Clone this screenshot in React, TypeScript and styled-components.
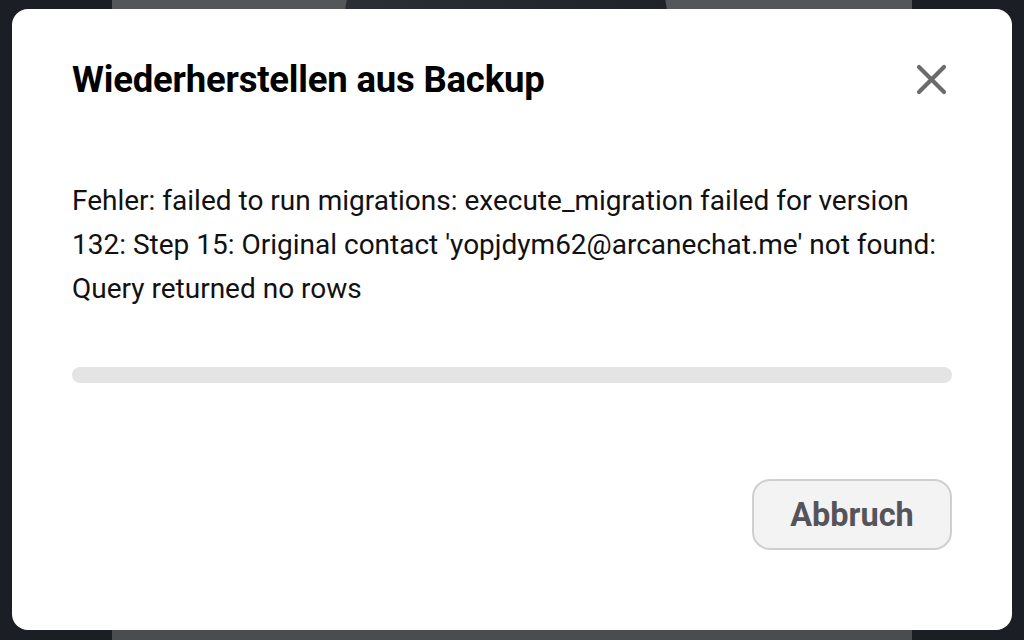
import React from 'react';
import styled, { createGlobalStyle } from 'styled-components';

const GlobalStyle = createGlobalStyle`
    html, body {
        margin: 0;
        padding: 0;
        width: 1024px;
        height: 640px;
        overflow: hidden;
        font-family: Roboto, "Liberation Sans", Arial, sans-serif;
    }
`;

const Page = styled.div`
    position: relative;
    width: 1024px;
    height: 640px;
    background-color: #1b1e25;
    display: flex;
    justify-content: center;
`;

const MainColumn = styled.div`
    width: 800px;
    height: 100%;
    background: linear-gradient(180deg, #555659 0%, #4b4c50 100%);
    display: flex;
`;

const TopShape = styled.div`
    margin-left: 228px;
    width: 332px;
    height: 40px;
    background: linear-gradient(90deg, #2c2f35, #1f2329);
    clip-path: polygon(2% 0, 98% 0, 100% 100%, 0 100%);
`;

const Dialog = styled.div`
    position: absolute;
    left: 12px;
    top: 9px;
    width: 1000px;
    height: 621px;
    box-sizing: border-box;
    padding: 0 60px;
    background: #ffffff;
    border-radius: 16px;
    display: flex;
    flex-direction: column;
`;

const Header = styled.header`
    margin-top: 40px;
    height: 60px;
    display: flex;
    align-items: center;
    justify-content: space-between;
`;

const Title = styled.h2`
    margin: 0;
    font-size: 36.5px;
    font-weight: 700;
    color: #000000;
    letter-spacing: -0.2px;
`;

const CloseButton = styled.button`
    width: 31px;
    height: 31px;
    margin-right: 5px;
    padding: 0;
    border: none;
    background: none;
    display: flex;
    cursor: pointer;
`;

const Message = styled.p`
    margin: 70px 0 0;
    font-size: 28px;
    line-height: 44px;
    color: #111111;
`;

const Progress = styled.div`
    margin-top: 56px;
    height: 16px;
    border-radius: 8px;
    background: #e5e4e5;
`;

const Footer = styled.footer`
    margin-top: 96px;
    display: flex;
    justify-content: flex-end;
`;

const CancelButton = styled.button`
    width: 200px;
    height: 71px;
    box-sizing: border-box;
    border: 2px solid #cfcfcf;
    border-radius: 18px;
    background: #f3f3f3;
    color: #55545a;
    font-family: Roboto, "Liberation Sans", Arial, sans-serif;
    font-size: 32.5px;
    font-weight: 700;
    cursor: pointer;
`;

const CloseIcon = () => (
    <svg width="31" height="31" viewBox="0 0 31 31">
        <path d="M3 3 L28 28 M28 3 L3 28" stroke="#6b6b6b" strokeWidth="4.2" strokeLinecap="round" fill="none" />
    </svg>
);

const App = () => {
    return (
        <>
            <GlobalStyle />
            <Page>
                <MainColumn>
                    <TopShape />
                </MainColumn>
                <Dialog>
                    <Header>
                        <Title>Wiederherstellen aus Backup</Title>
                        <CloseButton aria-label="Schließen">
                            <CloseIcon />
                        </CloseButton>
                    </Header>
                    <Message>
                        Fehler: failed to run migrations: execute_migration failed for version 132: Step 15: Original contact 'yopjdym62@arcanechat.me' not found: Query returned no rows
                    </Message>
                    <Progress />
                    <Footer>
                        <CancelButton>Abbruch</CancelButton>
                    </Footer>
                </Dialog>
            </Page>
        </>
    );
};

export default App;
